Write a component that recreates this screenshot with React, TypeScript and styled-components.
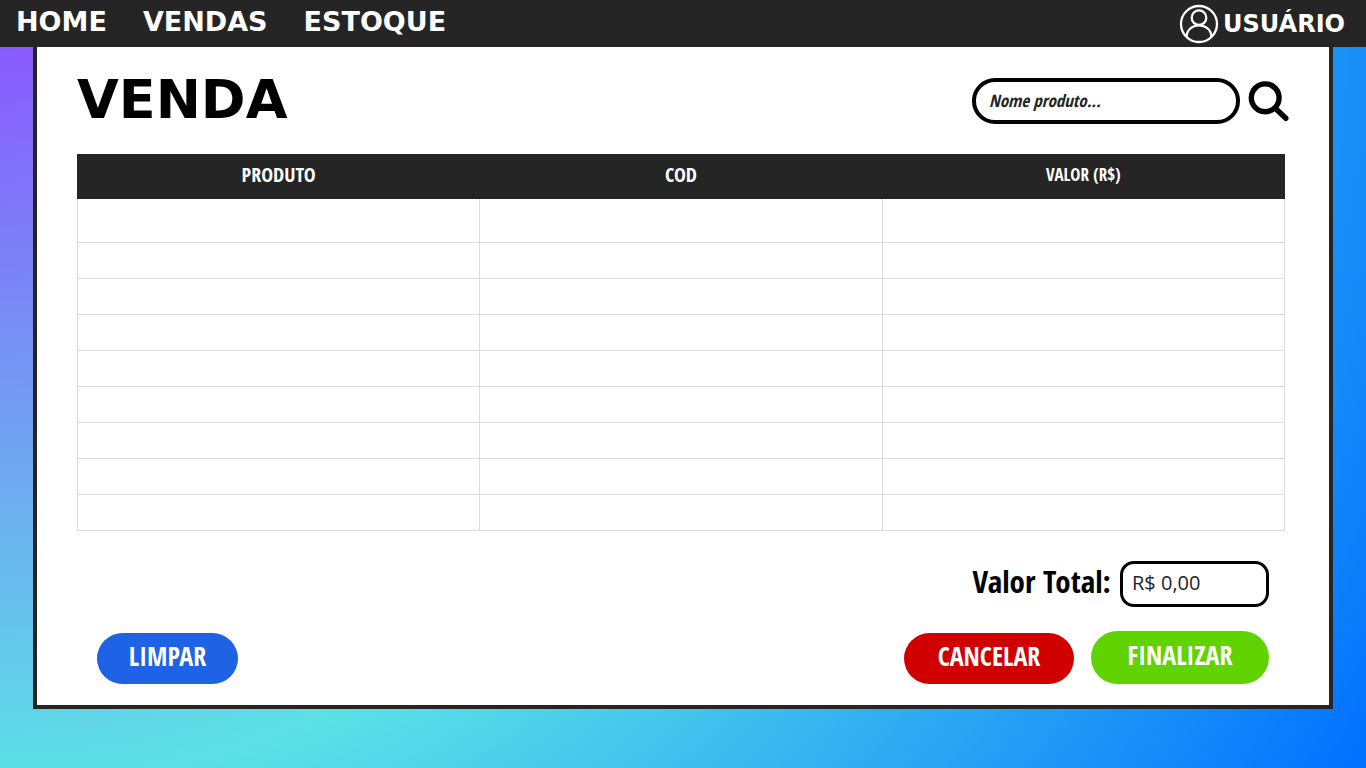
import React from "react";
import styled, { createGlobalStyle } from "styled-components";

const wide = `"DejaVu Sans", Verdana, sans-serif`;
const narrow = `"Open Sans Condensed", "Liberation Sans Narrow", "Arial Narrow", "Open Sans", sans-serif`;
const ink = "#252525";

const GlobalStyle = createGlobalStyle`
  *, *::before, *::after { box-sizing: border-box; }
  body { margin: 0; }
`;

const Page = styled.div`
  min-height: 100vh;
  padding-bottom: 59px;
  background: radial-gradient(circle farthest-corner at 0 0, #8c52ff 0%, #5ce1e6 50%, #0070ff 100%);
`;

const TopBar = styled.header`
  display: flex;
  align-items: center;
  justify-content: space-between;
  height: 47px;
  padding: 0 21px 0 16px;
  background: ${ink};
`;

const Nav = styled.nav`
  display: flex;
  gap: 36px;
  padding-bottom: 4px;
`;

const NavLink = styled.a<{ $size: number }>`
  display: flex;
  align-items: center;
  gap: 4px;
  color: #fff;
  font: 700 ${(p) => p.$size}px/32px ${wide};
  text-decoration: none;
`;

const Panel = styled.main`
  margin: 0 33px;
  min-height: 662px;
  padding: 31px 40px 21px;
  border: 4px solid ${ink};
  border-top: 0;
  background: #fff;
`;

const PanelHead = styled.div`
  display: flex;
  align-items: center;
  justify-content: space-between;
  height: 46px;
  margin-bottom: 30px;
`;

const Title = styled.h1`
  margin: 0;
  padding-bottom: 2px;
  color: #000;
  font: 700 54px/46px ${wide};
`;

const Search = styled.form`
  display: flex;
  align-items: center;
  gap: 8px;
`;

const SearchInput = styled.input`
  width: 268px;
  height: 46px;
  padding: 0 13px 2px;
  border: 4px solid #000;
  border-radius: 23px;
  background: #fff;
  color: ${ink};
  font: italic 700 17px/24px ${narrow};
  &::placeholder { color: ${ink}; opacity: 1; }
`;

const IconButton = styled.button`
  display: flex;
  padding: 0;
  border: 0;
  background: none;
  cursor: pointer;
`;

const Content = styled.div`
  padding-right: 4px;
`;

const Table = styled.table`
  width: 100%;
  table-layout: fixed;
  border-collapse: collapse;
`;

const HeadCell = styled.th<{ $size: number }>`
  height: 44px;
  padding: 0 0 3px;
  border: 1px solid ${ink};
  background: ${ink};
  color: #fff;
  font: 700 ${(p) => p.$size}px/24px ${narrow};
`;

const Row = styled.tr`
  height: 36px;
  &:first-child { height: 44px; }
`;

const Cell = styled.td`
  padding: 0;
  border: 1px solid #dcdcdc;
`;

const Total = styled.div`
  display: flex;
  align-items: center;
  justify-content: flex-end;
  gap: 9px;
  padding: 30px 16px 24px 0;
`;

const TotalLabel = styled.label`
  padding-bottom: 6px;
  color: #000;
  font: 700 31px/40px ${narrow};
`;

const TotalInput = styled.input`
  width: 149px;
  height: 46px;
  padding: 0 9px 4px;
  border: 3px solid #000;
  border-radius: 14px;
  background: #fff;
  color: ${ink};
  font: 400 20px/24px "Open Sans", "Noto Sans", sans-serif;
`;

const Actions = styled.div`
  display: flex;
  align-items: flex-end;
  gap: 17px;
  padding: 0 16px 0 20px;
`;

const Action = styled.button<{ $color: string; $width: number; $height?: number }>`
  width: ${(p) => p.$width}px;
  height: ${(p) => p.$height ?? 51}px;
  padding: 0 0 6px;
  border: 0;
  border-radius: 27px;
  background: ${(p) => p.$color};
  color: #fff;
  font: 700 26px/32px ${narrow};
  cursor: pointer;
  &:first-child { margin-right: auto; }
`;

const rows = Array.from({ length: 9 }, (_, i) => i);

export default function App() {
  return (
    <Page>
      <GlobalStyle />
      <TopBar>
        <Nav>
          <NavLink href="#home" $size={27}>HOME</NavLink>
          <NavLink href="#vendas" $size={27}>VENDAS</NavLink>
          <NavLink href="#estoque" $size={27}>ESTOQUE</NavLink>
        </Nav>
        <NavLink href="#usuario" $size={24}>
          <svg width="40" height="40" viewBox="0 0 40 40" fill="none" stroke="#fff" strokeWidth="2.300" aria-hidden="true">
            <circle cx="20" cy="20" r="18" />
            <circle cx="20" cy="13.700" r="7.300" />
            <path d="M7.600 32.800C7.800 26 13 21.300 20 21.300S32.200 26 32.400 32.800" />
          </svg>
          USUÁRIO
        </NavLink>
      </TopBar>
      <Panel>
        <PanelHead>
          <Title>VENDA</Title>
          <Search onSubmit={(e) => e.preventDefault()}>
            <SearchInput aria-label="Nome produto" placeholder="Nome produto..." />
            <IconButton type="submit" aria-label="Buscar">
              <svg width="41" height="41" viewBox="0 0 41 41" fill="none" stroke="#000" strokeWidth="5.400" aria-hidden="true">
                <circle cx="17.200" cy="16.800" r="13.900" />
                <path d="M27 27L37.800 37.300" strokeLinecap="round" />
              </svg>
            </IconButton>
          </Search>
        </PanelHead>
        <Content>
          <Table>
            <thead>
              <tr>
                <HeadCell scope="col" $size={20}>PRODUTO</HeadCell>
                <HeadCell scope="col" $size={20}>COD</HeadCell>
                <HeadCell scope="col" $size={17}>VALOR (R$)</HeadCell>
              </tr>
            </thead>
            <tbody>
              {rows.map((row) => (
                <Row key={row}>
                  <Cell />
                  <Cell />
                  <Cell />
                </Row>
              ))}
            </tbody>
          </Table>
          <Total>
            <TotalLabel htmlFor="total">Valor Total:</TotalLabel>
            <TotalInput id="total" defaultValue="R$ 0,00" readOnly />
          </Total>
          <Actions>
            <Action type="button" $color="#1e62e6" $width={141}>LIMPAR</Action>
            <Action type="button" $color="#d00000" $width={170}>CANCELAR</Action>
            <Action type="button" $color="#60d300" $width={178} $height={53}>FINALIZAR</Action>
          </Actions>
        </Content>
      </Panel>
    </Page>
  );
}
